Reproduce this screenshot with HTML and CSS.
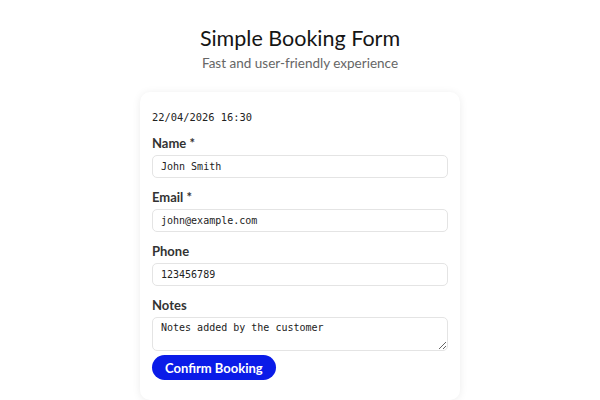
FILE: index.html
```html
<!DOCTYPE html>
<html>
<head>
<meta charset="utf-8">
<link rel="stylesheet" href="styles.css">
</head>
<body>
<header class="head">
  <h1 class="title">Simple Booking Form</h1>
  <p class="subtitle">Fast and user-friendly experience</p>
</header>
<main class="card">
  <div class="datetime">22/04/2026 16:30</div>
  <div class="field">
    <label class="label">Name *</label>
    <input class="input" type="text" value="John Smith">
  </div>
  <div class="field">
    <label class="label">Email *</label>
    <input class="input" type="text" value="john@example.com">
  </div>
  <div class="field">
    <label class="label">Phone</label>
    <input class="input" type="text" value="123456789">
  </div>
  <div class="field">
    <label class="label">Notes</label>
    <textarea class="input textarea">Notes added by the customer</textarea>
  </div>
  <button class="btn">Confirm Booking</button>
</main>
</body>
</html>
```
FILE: styles.css
```css
* { box-sizing: border-box; }
body {
  margin: 0;
  background: #ffffff;
  font-family: "Lato", sans-serif;
  display: flex;
  flex-direction: column;
  align-items: center;
}
.head { text-align: center; padding-top: 24px; }
.title {
  margin: 0;
  font-family: "Lato", sans-serif;
  font-weight: 400;
  font-size: 21.5px;
  line-height: 28px;
  color: #151515;
}
.subtitle {
  margin: 1px 0 0;
  font-family: "Lato", sans-serif;
  font-size: 13.5px;
  line-height: 20px;
  color: #666;
}
.card {
  margin-top: 19px;
  width: 320px;
  background: #fff;
  border-radius: 10px;
  box-shadow: 0 1px 8px rgba(0,0,0,0.08);
  padding: 17px 12px 20px;
  display: flex;
  flex-direction: column;
}
.datetime {
  font-family: "DejaVu Sans Mono", monospace;
  font-size: 10.4px;
  line-height: 16px;
  color: #222;
  margin-bottom: 10px;
}
.field { display: flex; flex-direction: column; margin-bottom: 11px; }
.label {
  font-size: 13px;
  font-weight: bold;
  line-height: 16px;
  color: #333;
  margin-bottom: 4px;
}
.input {
  width: 100%;
  height: 23px;
  border: 1px solid #e4e4e4;
  border-radius: 5px;
  padding: 0 8px;
  font-family: "DejaVu Sans Mono", monospace;
  font-size: 10px;
  color: #222;
  background: #fff;
}
.textarea {
  height: 34px;
  padding: 4px 8px;
  resize: vertical;
  display: block;
}
.field:last-of-type { margin-bottom: 4px; }
.btn {
  align-self: flex-start;
  height: 25px;
  padding: 0 13px;
  border: none;
  border-radius: 13px;
  background: #0a1be8;
  color: #fff;
  font-family: "Lato", sans-serif;
  font-weight: bold;
  font-size: 13px;
}
```
